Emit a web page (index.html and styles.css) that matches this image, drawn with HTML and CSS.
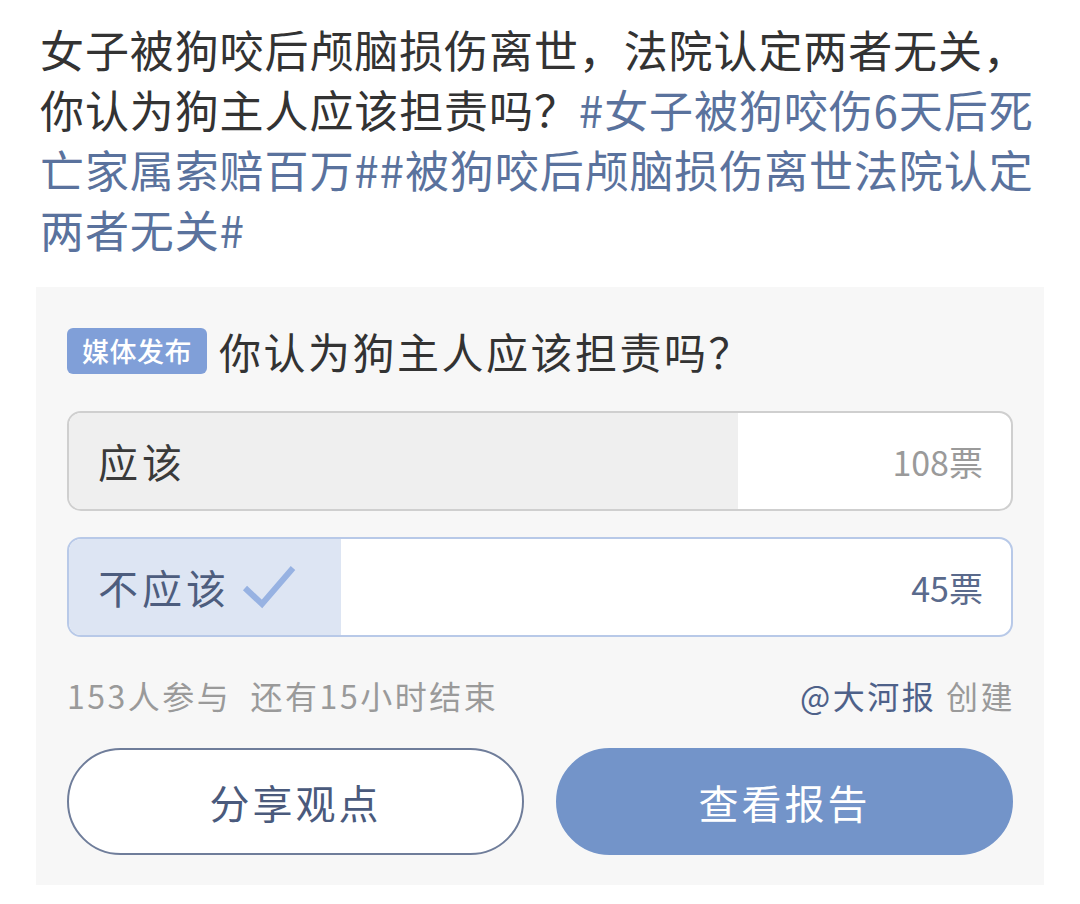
FILE: index.html
```html
<!DOCTYPE html>
<html lang="zh-CN">
<head>
<meta charset="utf-8">
<title>投票</title>
<link rel="stylesheet" href="styles.css">
</head>
<body>
<div class="page">
  <p class="post">女子被狗咬后颅脑损伤离世，法院认定两者无关，你认为狗主人应该担责吗？<span class="topic">#女子被狗咬伤6天后死亡家属索赔百万##被狗咬后颅脑损伤离世法院认定两者无关#</span></p>
  <section class="poll">
    <div class="poll-head">
      <span class="badge">媒体发布</span>
      <span class="question">你认为狗主人应该担责吗？</span>
    </div>
    <div class="option">
      <div class="fill" style="width:71%"></div>
      <span class="opt-label">应该</span>
      <span class="opt-count">108票</span>
    </div>
    <div class="option chosen">
      <div class="fill" style="width:28.9%"></div>
      <span class="opt-label">不应该<svg class="check" width="54" height="46" viewBox="0 0 54 46"><path d="M3 24 L20 40 L51 4" fill="none" stroke="#97b2e2" stroke-width="6" stroke-linejoin="miter"/></svg></span>
      <span class="opt-count">45票</span>
    </div>
    <div class="meta">
      <span class="meta-left">153人参与&nbsp;&nbsp;还有15小时结束</span>
      <span class="meta-right"><span class="author">@大河报</span> 创建</span>
    </div>
    <div class="actions">
      <button class="btn btn-outline">分享观点</button>
      <button class="btn btn-fill">查看报告</button>
    </div>
  </section>
</div>
</body>
</html>
```
FILE: styles.css
```css
* { box-sizing: border-box; }
html, body { margin: 0; padding: 0; background: #ffffff; }
body {
  font-family: "Noto Sans CJK SC", "Noto Sans", sans-serif;
  width: 1080px;
  height: 904px;
  overflow: hidden;
}
.page {
  padding: 19px 36px 0 36px;
}
.post {
  margin: 0 0 28px 4px;
  font-size: 44px;
  line-height: 60px;
  letter-spacing: 0.9px;
  color: #333333;
}
.topic { color: #5a729d; }
.poll {
  background: #f7f7f7;
  padding: 41px 31px 30px 31px;
}
.poll-head {
  display: flex;
  align-items: center;
  gap: 12px;
}
.badge {
  background: #809fd8;
  color: #ffffff;
  font-size: 27px;
  font-weight: 500;
  line-height: 46px;
  height: 46px;
  padding: 0 15px;
  border-radius: 6px;
  letter-spacing: 0.5px;
}
.question {
  font-size: 42px;
  letter-spacing: 2.5px;
  color: #333333;
  line-height: 46px;
}
.option {
  position: relative;
  margin-top: 37px;
  height: 100px;
  border: 2px solid #cfcfcf;
  border-radius: 14px;
  background: #ffffff;
  overflow: hidden;
  display: flex;
  align-items: center;
  justify-content: space-between;
  padding: 0 28px 0 29px;
}
.option + .option { margin-top: 26px; }
.fill {
  position: absolute;
  left: 0; top: 0; bottom: 0;
  background: #efefef;
}
.opt-label, .opt-count { position: relative; }
.opt-label {
  font-size: 40px;
  letter-spacing: 4px;
  color: #3a3a3a;
  display: flex;
  align-items: center;
}
.opt-count {
  font-size: 34px;
  color: #9a9a9a;
}
.chosen { border-color: #b8c9e8; }
.chosen .fill { background: #dde5f3; }
.chosen .opt-label { color: #4d5d7e; }
.chosen .opt-count { color: #5a6a8c; }
.check { margin-left: 12px; margin-top: 0; }
.meta {
  display: flex;
  justify-content: space-between;
  align-items: center;
  margin-top: 38px;
  font-size: 32px;
  letter-spacing: 2.5px;
  line-height: 40px;
  color: #9a9a9a;
}
.meta-right { margin-right: -2px; }
.author { color: #4e6189; }
.actions {
  display: flex;
  gap: 32px;
  margin-top: 33px;
}
.btn {
  flex: 1;
  height: 107px;
  border-radius: 54px;
  font-family: inherit;
  font-size: 40px;
  letter-spacing: 3px;
}
.btn-outline {
  background: #ffffff;
  border: 2px solid #6f7d9a;
  color: #4a5a7c;
}
.btn-fill {
  background: #7394c9;
  border: 2px solid #7394c9;
  color: #ffffff;
}
```
